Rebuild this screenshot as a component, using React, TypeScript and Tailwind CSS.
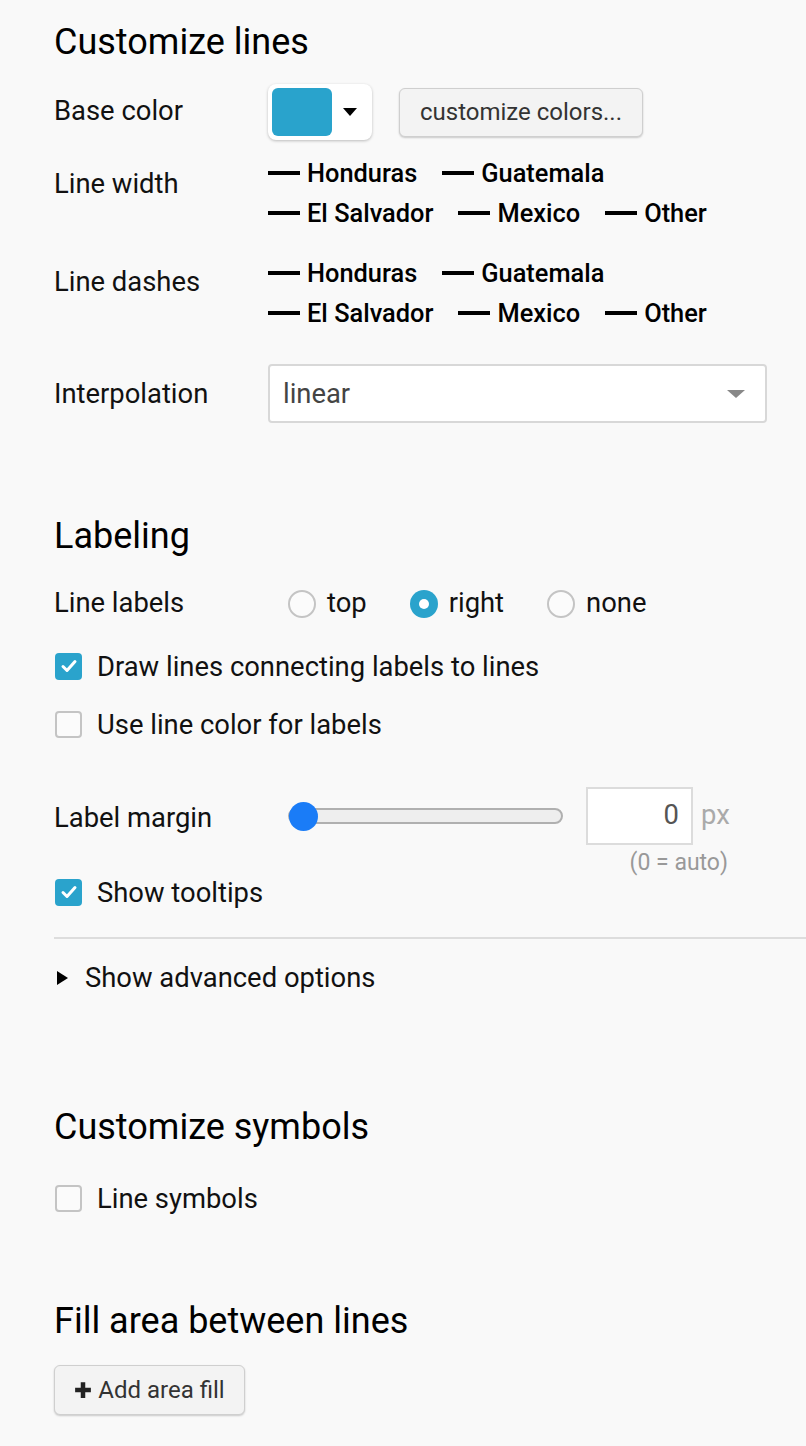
import React from "react";

const legend = ["Honduras", "Guatemala", "El Salvador", "Mexico", "Other"];

const Legend: React.FC = () => (
  <div className="flex w-[500px] flex-wrap gap-x-[25px]">
    {legend.map((name) => (
      <div key={name} className="flex h-[40px] items-center gap-[7px]">
        <span className="h-[4px] w-[32px] bg-black" />
        <span className="text-[25.4px] font-medium text-black">{name}</span>
      </div>
    ))}
  </div>
);

const Check: React.FC<{ checked?: boolean; label: string }> = ({ checked, label }) => (
  <div className="flex h-[40px] items-center gap-[15px]">
    {checked ? (
      <span className="ml-[1px] flex h-[27px] w-[27px] items-center justify-center rounded-[4px] bg-[#2aa3cc]">
        <svg viewBox="0 0 20 20" className="h-[20px] w-[20px]">
          <path d="M4 10.5l4 4 8-9" fill="none" stroke="white" strokeWidth="3" strokeLinecap="round" strokeLinejoin="round" />
        </svg>
      </span>
    ) : (
      <span className="ml-[1px] h-[27px] w-[27px] rounded-[4px] border-2 border-[#c4c4c4] bg-[#fbfbfb]" />
    )}
    <span className="pt-[3px]">{label}</span>
  </div>
);

const Radio: React.FC<{ checked?: boolean; label: string }> = ({ checked, label }) => (
  <div className="flex items-center gap-[11px]">
    {checked ? (
      <span className="flex h-[28px] w-[28px] items-center justify-center rounded-full bg-[#2aa3cc]">
        <span className="h-[10px] w-[10px] rounded-full bg-white" />
      </span>
    ) : (
      <span className="h-[28px] w-[28px] rounded-full border-2 border-[#c4c4c4] bg-[#fbfbfb]" />
    )}
    <span>{label}</span>
  </div>
);

const App: React.FC = () => {
  return (
    <div className="min-h-screen bg-[#f9f9f9] pl-[54px] pt-[22px] font-['Roboto',sans-serif] text-[27.4px] font-normal text-[#111]">
      <h2 className="text-[36px] leading-[40px] font-normal text-black">Customize lines</h2>

      <div className="mt-[22px] flex h-[56px] items-center">
        <div className="w-[214px]">Base color</div>
        <div className="flex h-[56px] w-[104px] items-center rounded-[8px] bg-white pl-[4px] shadow-[0_1px_3px_rgba(0,0,0,0.25)]">
          <span className="h-[48px] w-[60px] rounded-[6px] bg-[#29a3cc]" />
          <span className="ml-[11px] h-0 w-0 border-x-[7px] border-t-[8px] border-x-transparent border-t-black" />
        </div>
        <button className="ml-[27px] h-[49px] w-[244px] rounded-[6px] border border-[#cfcfcf] bg-[#f3f3f3] text-[24px] font-normal text-[#333] shadow-[0_1px_2px_rgba(0,0,0,0.2)]">
          customize colors...
        </button>
      </div>

      <div className="mt-[13px] flex">
        <div className="w-[214px] pt-[11px] leading-[40px]">Line width</div>
        <Legend />
      </div>

      <div className="mt-[20px] flex">
        <div className="w-[214px] pt-[9px] leading-[40px]">Line dashes</div>
        <Legend />
      </div>

      <div className="mt-[31px] flex items-center">
        <div className="w-[214px] pt-[2px]">Interpolation</div>
        <div className="flex h-[59px] w-[499px] items-center justify-between rounded-[4px] border-2 border-[#d8d8d8] bg-white pl-[13px] pr-[20px] text-[#444]">
          <span className="pt-[2px]">linear</span>
          <span className="h-0 w-0 border-x-[9px] border-t-[8px] border-x-transparent border-t-[#888]" />
        </div>
      </div>

      <h2 className="mt-[93px] text-[36px] leading-[40px] font-normal text-black">Labeling</h2>

      <div className="mt-[27px] flex h-[40px] items-center pt-[2px]">
        <div className="w-[234px]">Line labels</div>
        <div className="flex gap-[43px]">
          <Radio label="top" />
          <Radio checked label="right" />
          <Radio label="none" />
        </div>
      </div>

      <div className="mt-[23px]">
        <Check checked label="Draw lines connecting labels to lines" />
      </div>
      <div className="mt-[18px]">
        <Check label="Use line color for labels" />
      </div>

      <div className="mt-[43px] flex h-[58px] items-center">
        <div className="w-[234px] pt-[5px]">Label margin</div>
        <div className="relative flex h-[30px] w-[275px] items-center">
          <div className="h-[16px] w-full rounded-full border-2 border-[#b0b0b0] bg-[#eeeeee]" />
          <span className="absolute left-[1px] top-[1px] h-[29px] w-[29px] rounded-full bg-[#1a7cf7]" />
        </div>
        <div className="ml-[23px] flex h-[58px] w-[107px] items-center justify-end border-2 border-[#dcdcdc] bg-white pr-[12px] text-[#555]">
          0
        </div>
        <span className="ml-[8px] text-[#aaa]">px</span>
      </div>
      <div className="mt-[6px] w-[674px] text-right text-[23px] leading-[24px] text-[#999]">(0 = auto)</div>

      <div className="mt-[-3px]">
        <Check checked label="Show tooltips" />
      </div>

      <div className="mt-[25px] border-t-2 border-[#dddddd]" />

      <div className="mt-[19px] flex h-[40px] items-center gap-[17px]">
        <span className="ml-[3px] h-0 w-0 border-y-[7px] border-l-[11px] border-y-transparent border-l-black" />
        <span className="pt-[2px]">Show advanced options</span>
      </div>

      <h2 className="mt-[109px] text-[36px] leading-[40px] font-normal text-black">Customize symbols</h2>
      <div className="mt-[31px]">
        <Check label="Line symbols" />
      </div>

      <h2 className="mt-[83px] text-[36px] leading-[40px] font-normal text-black">Fill area between lines</h2>
      <button className="mt-[24px] flex h-[50px] w-[191px] items-center justify-center gap-[6px] rounded-[6px] border border-[#cfcfcf] bg-[#f3f3f3] text-[24px] font-normal text-[#333] shadow-[0_1px_2px_rgba(0,0,0,0.2)]">
        <svg viewBox="0 0 16 16" className="h-[18px] w-[18px]">
          <path d="M6 1h4v5h5v4h-5v5H6v-5H1V6h5z" fill="#222" />
        </svg>
        Add area fill
      </button>
    </div>
  );
};

export default App;
